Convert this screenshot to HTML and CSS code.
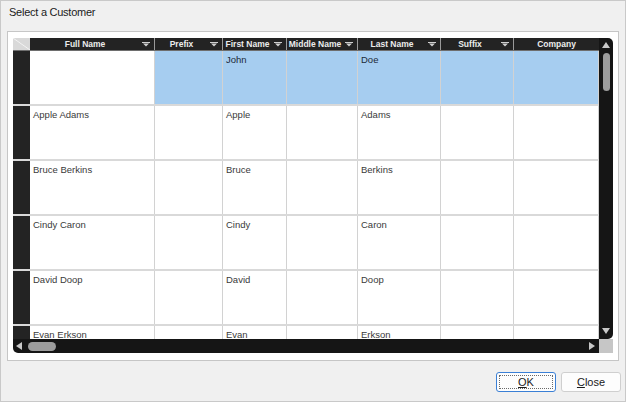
FILE: index.html
```html
<!DOCTYPE html>
<html>
<head>
<meta charset="utf-8">
<link rel="stylesheet" href="styles.css">
</head>
<body>
<div class="title">Select a Customer</div>
<div class="panel">
  <div class="grid">
    <div class="viewport">
      <div class="hdr">
        <div class="tl"></div>
        <div class="h w1"><span class="lbl">Full Name</span><svg class="fi" width="8" height="5" viewBox="0 0 8 5"><path d="M0 0.5H8" stroke="#cfcfcf" stroke-width="1"/><path d="M1 1.5H7L4 4.6Z" fill="#cfcfcf"/></svg></div>
        <div class="h w2"><span class="lbl">Prefix</span><svg class="fi" width="8" height="5" viewBox="0 0 8 5"><path d="M0 0.5H8" stroke="#cfcfcf" stroke-width="1"/><path d="M1 1.5H7L4 4.6Z" fill="#cfcfcf"/></svg></div>
        <div class="h w3"><span class="lbl">First Name</span><svg class="fi" width="8" height="5" viewBox="0 0 8 5"><path d="M0 0.5H8" stroke="#cfcfcf" stroke-width="1"/><path d="M1 1.5H7L4 4.6Z" fill="#cfcfcf"/></svg></div>
        <div class="h w4"><span class="lbl">Middle Name</span><svg class="fi" width="8" height="5" viewBox="0 0 8 5"><path d="M0 0.5H8" stroke="#cfcfcf" stroke-width="1"/><path d="M1 1.5H7L4 4.6Z" fill="#cfcfcf"/></svg></div>
        <div class="h w5"><span class="lbl">Last Name</span><svg class="fi" width="8" height="5" viewBox="0 0 8 5"><path d="M0 0.5H8" stroke="#cfcfcf" stroke-width="1"/><path d="M1 1.5H7L4 4.6Z" fill="#cfcfcf"/></svg></div>
        <div class="h w6"><span class="lbl">Suffix</span><svg class="fi" width="8" height="5" viewBox="0 0 8 5"><path d="M0 0.5H8" stroke="#cfcfcf" stroke-width="1"/><path d="M1 1.5H7L4 4.6Z" fill="#cfcfcf"/></svg></div>
        <div class="h w7 last"><span class="lbl">Company</span></div>
      </div>
      <div class="row">
        <div class="rh"></div>
        <div class="c w1"></div>
        <div class="c w2 sel"></div>
        <div class="c w3 sel">John</div>
        <div class="c w4 sel"></div>
        <div class="c w5 sel">Doe</div>
        <div class="c w6 sel"></div>
        <div class="c w7 sel"></div>
      </div>
      <div class="row">
        <div class="rh"></div>
        <div class="c w1">Apple Adams</div>
        <div class="c w2"></div>
        <div class="c w3">Apple</div>
        <div class="c w4"></div>
        <div class="c w5">Adams</div>
        <div class="c w6"></div>
        <div class="c w7"></div>
      </div>
      <div class="row">
        <div class="rh"></div>
        <div class="c w1">Bruce Berkins</div>
        <div class="c w2"></div>
        <div class="c w3">Bruce</div>
        <div class="c w4"></div>
        <div class="c w5">Berkins</div>
        <div class="c w6"></div>
        <div class="c w7"></div>
      </div>
      <div class="row">
        <div class="rh"></div>
        <div class="c w1">Cindy Caron</div>
        <div class="c w2"></div>
        <div class="c w3">Cindy</div>
        <div class="c w4"></div>
        <div class="c w5">Caron</div>
        <div class="c w6"></div>
        <div class="c w7"></div>
      </div>
      <div class="row">
        <div class="rh"></div>
        <div class="c w1">David Doop</div>
        <div class="c w2"></div>
        <div class="c w3">David</div>
        <div class="c w4"></div>
        <div class="c w5">Doop</div>
        <div class="c w6"></div>
        <div class="c w7"></div>
      </div>
      <div class="row">
        <div class="rh"></div>
        <div class="c w1">Evan Erkson</div>
        <div class="c w2"></div>
        <div class="c w3">Evan</div>
        <div class="c w4"></div>
        <div class="c w5">Erkson</div>
        <div class="c w6"></div>
        <div class="c w7"></div>
      </div>
    </div>
    <div class="vs">
      <svg class="arr-up" width="8" height="6" viewBox="0 0 8 6"><path d="M0 6L4 0L8 6Z" fill="#c8c8c8"/></svg>
      <div class="vthumb"></div>
      <div class="spacer"></div>
      <svg class="arr-dn" width="8" height="6" viewBox="0 0 8 6"><path d="M0 0L4 6L8 0Z" fill="#c8c8c8"/></svg>
    </div>
    <div class="hs">
      <svg class="arr-l" width="6" height="8" viewBox="0 0 6 8"><path d="M6 0L0 4L6 8Z" fill="#c8c8c8"/></svg>
      <div class="hthumb"></div>
      <div class="spacer"></div>
      <svg class="arr-r" width="6" height="8" viewBox="0 0 6 8"><path d="M0 0L6 4L0 8Z" fill="#c8c8c8"/></svg>
    </div>
    <div class="sq"></div>
  </div>
</div>
<div class="actions">
  <div class="btn ok"><span class="focus"><u>O</u>K</span></div>
  <div class="btn"><span><u>C</u>lose</span></div>
</div>
</body>
</html>
```

FILE: styles.css
```css
* { box-sizing: border-box; }
html, body { margin: 0; padding: 0; }
body {
  width: 626px;
  height: 402px;
  background: #f0f0f0;
  border: 1px solid #c9c9c9;
  font-family: "Liberation Sans", Arial, sans-serif;
  display: flex;
  flex-direction: column;
  overflow: hidden;
}
.title {
  height: 30px;
  flex: none;
  padding: 5px 0 0 8px;
  font-size: 11px;
  line-height: 13px;
  color: #1b1b1b;
  letter-spacing: -0.25px;
}
.panel {
  margin: 0 6px;
  height: 330px;
  flex: none;
  background: #fff;
  border: 1px solid #c6c6c6;
  padding: 6px 5px 7px 5px;
}
.grid {
  display: grid;
  grid-template-columns: 586px 14px;
  grid-template-rows: 301px 14px;
  height: 315px;
}
.viewport {
  overflow: hidden;
  background: #fff;
}
.hdr {
  display: flex;
  height: 13px;
  background: #232323;
  border-bottom: 1px solid #6e6e6e;
}
.tl {
  width: 17px;
  flex: none;
  background: linear-gradient(to top right, #d9d9d9 46%, #f3f3f3 50%, #d9d9d9 54%);
}
.h {
  flex: none;
  display: flex;
  align-items: center;
  border-right: 1px solid #9a9a9a;
  color: #ececec;
  font-weight: bold;
  font-size: 8.5px;
  line-height: 12px;
  white-space: nowrap;
  overflow: hidden;
}
.h.last { border-right: none; }
.lbl { flex: 1; text-align: center; }
.fi { flex: none; margin: 1px 4px 0 2px; }
.row {
  display: flex;
  height: 55px;
  border-bottom: 2px solid #d9d9d9;
}
.rh {
  width: 17px;
  flex: none;
  background: #232323;
}
.c {
  flex: none;
  border-right: 1px solid #d2d2d2;
  font-size: 9.5px;
  line-height: 11px;
  color: #3a3a3a;
  padding: 3px 0 0 3px;
  white-space: nowrap;
  overflow: hidden;
}
.c.sel { background: #a6cdf0; color: #1d2a38; }
.w1 { width: 125px; }
.w2 { width: 68px; }
.w3 { width: 64px; }
.w4 { width: 71px; }
.w5 { width: 83px; }
.w6 { width: 73px; }
.w7 { width: 85px; }
.vs {
  background: #151515;
  border-radius: 0 5px 5px 0;
  display: flex;
  flex-direction: column;
  align-items: center;
  padding: 4px 0 5px 0;
}
.arr-up { flex: none; margin-bottom: 5px; }
.vthumb {
  width: 7px;
  height: 38px;
  border-radius: 4px;
  background: #9c9c9c;
  flex: none;
}
.spacer { flex: 1; }
.arr-dn { flex: none; }
.hs {
  background: #151515;
  border-radius: 0 0 0 5px;
  display: flex;
  align-items: center;
  padding: 0 4px 0 3px;
}
.arr-l { flex: none; margin-right: 6px; }
.hthumb {
  width: 28px;
  height: 9px;
  border-radius: 5px;
  background: #9c9c9c;
  flex: none;
}
.arr-r { flex: none; }
.sq { background: #c6c6c6; }
.actions {
  display: flex;
  justify-content: flex-end;
  gap: 5px;
  padding-right: 4px;
  margin-top: 11px;
}
.btn {
  width: 60px;
  height: 20px;
  background: #fdfdfd;
  border: 1px solid #cfcfcf;
  border-radius: 3px;
  font-size: 11px;
  color: #1a1a1a;
  display: flex;
  align-items: center;
  justify-content: center;
  padding: 2px;
}
.btn span { display: flex; align-items: center; justify-content: center; width: 100%; height: 100%; }
.btn.ok { border-color: #3a7fd5; }
.btn.ok .focus { outline: 1px dotted #6a6a6a; outline-offset: -1px; }
```
